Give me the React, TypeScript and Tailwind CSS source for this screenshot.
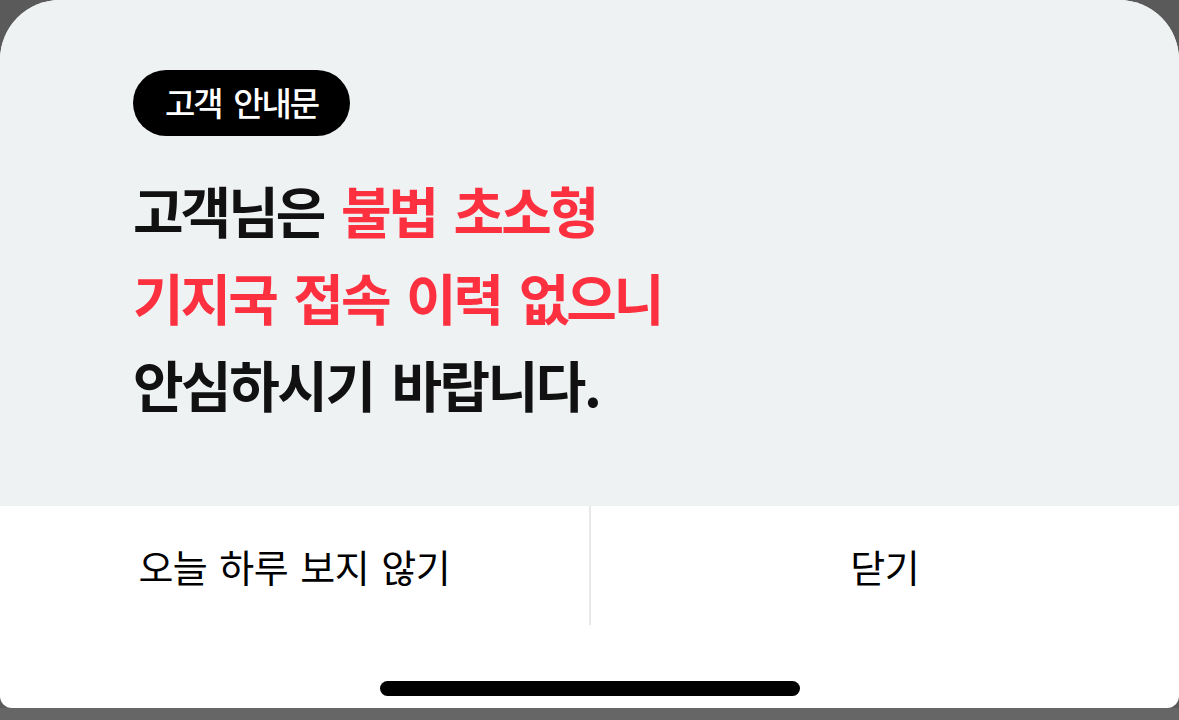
import React from "react";

const font = { fontFamily: '"Noto Sans CJK KR", "Noto Sans", sans-serif' };

export default function App()
{
    return (
        <div className="w-full h-[720px] bg-[#5a5a5a] flex flex-col overflow-hidden" style={font}>
            <main className="h-[708px] flex flex-col bg-white rounded-t-[60px] rounded-b-[12px] overflow-hidden">
                <section className="h-[506px] bg-[#eff2f3] pl-[133px] pt-[70px]">
                    <span className="inline-flex items-center h-[66px] px-[32px] rounded-full bg-black text-white text-[33px] font-medium tracking-[-2px] [word-spacing:6px]">
                        고객 안내문
                    </span>
                    <h2 className="mt-[30px] text-[55px] leading-[87px] font-bold tracking-[-3px] [word-spacing:8px] text-[#111]">
                        고객님은 <span className="text-[#fd3040]">불법 초소형</span>
                        <br />
                        <span className="text-[#fd3040]">기지국 접속 이력 없으니</span>
                        <br />
                        <span className="tracking-[-2.5px]">안심하시기 바랍니다.</span>
                    </h2>
                </section>

                <div className="h-[119px] flex">
                    <button className="flex-1 flex items-center justify-center text-[38px] tracking-[-0.5px] [word-spacing:4px] text-black">
                        오늘 하루 보지 않기
                    </button>
                    <div className="w-[2px] bg-[#e8e8e8]" />
                    <button className="flex-1 flex items-center justify-center text-[38px] tracking-[-0.5px] text-black">
                        닫기
                    </button>
                </div>

                <div className="flex-1 flex items-end justify-center pb-[12px]">
                    <div className="w-[420px] h-[15px] rounded-full bg-black" />
                </div>
            </main>
            <div className="flex-1 bg-[#666]" />
        </div>
    )
}
